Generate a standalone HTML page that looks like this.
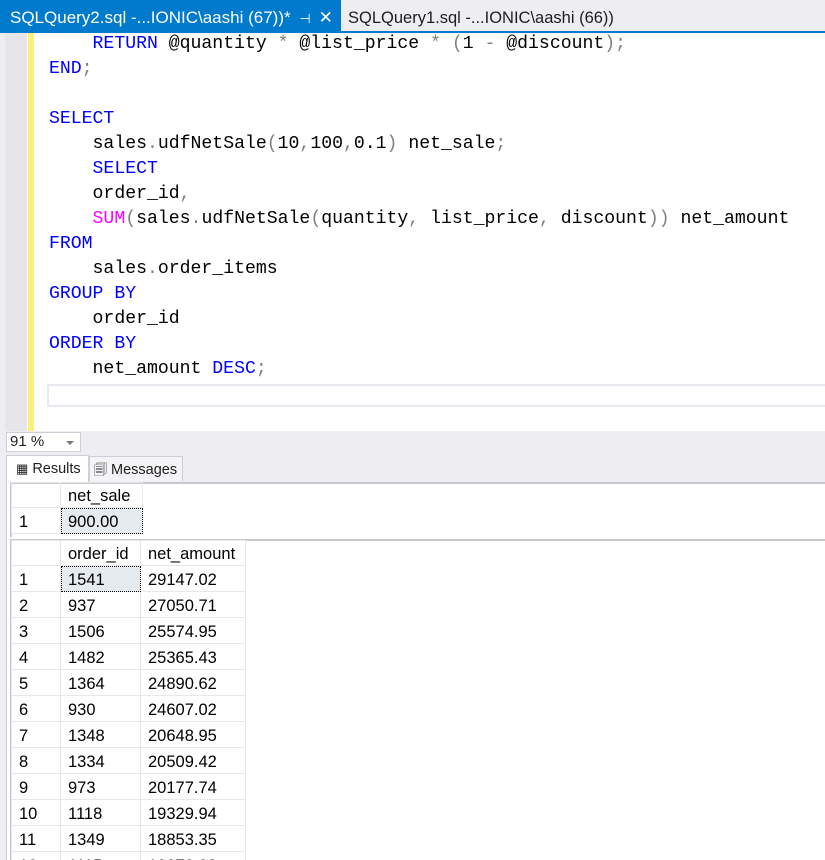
<!DOCTYPE html>
<html><head><meta charset="utf-8"><style>
*{margin:0;padding:0;box-sizing:border-box}
html,body{width:825px;height:860px;overflow:hidden}
body{background:#eeeef2;position:relative;font-family:"Liberation Sans",sans-serif}
#wrap{position:absolute;left:0;top:0;width:825px;height:860px;overflow:hidden}
.abs{position:absolute}
#tabs{left:0;top:0;width:825px;height:33px;background:#eeeef2;border-bottom:2px solid #007acc}
#t1{left:0;top:0;width:341px;height:31px;background:#007acc;color:#fff;font-size:17px;line-height:35px;padding-left:10px;white-space:nowrap}
#t2{left:348px;top:0;height:31px;color:#1e1e1e;font-size:16.5px;line-height:37px;white-space:nowrap}
#ed{left:5px;top:33px;width:820px;height:398px;background:#fff}
#gut{left:5px;top:33px;width:22px;height:398px;background:#e6e6ea}
#yel{left:28px;top:33px;width:6px;height:398px;background:#fbef7d}
#cur{left:47px;top:384px;width:778px;height:23px;border:2px solid #e8e8ee;border-right:none}
.code{left:49px;top:32px;font-family:"Liberation Mono",monospace;font-size:18.15px;line-height:25px;white-space:pre;color:#000}
.k{color:#0000ff}.g{color:#808080}.m{color:#ff00ff}
#zoom{left:6px;top:432px;width:75px;height:20px;background:#fff;border:1px solid #ccced8;font-size:15px;line-height:18px;padding-left:3px;color:#1e1e1e}
#zoom:after{content:"";position:absolute;right:6px;top:8px;border-left:4px solid transparent;border-right:4px solid transparent;border-top:4px solid #777}
.rt{top:456px;height:25px;font-size:14.5px;line-height:25px;color:#1e1e1e;border:1px solid #ccced8;border-bottom:none;white-space:nowrap}
#res{left:6px;top:482px;width:819px;height:378px;background:#fff;border-left:1px solid #ccced8}
table{position:absolute;border-collapse:collapse;font-size:16.5px;color:#000}
td{height:26px;border:1px solid #e8e8ea;padding:2px 0 0 7px;line-height:22px}
.sel{background:#e6ebf0;outline:1px dotted #000;outline-offset:-1px}
.gbox{left:10px;width:815px;background:#fff;border-top:2px solid #c8c8cc;border-left:2px solid #c8c8cc}
</style></head><body><div id="wrap">
<div id="tabs" class="abs"></div>
<div id="t1" class="abs">SQLQuery2.sql -...IONIC\aashi (67))* <span style="margin-left:4px;font-size:13px">⊣</span><span style="margin-left:8px">✕</span></div>
<div id="t2" class="abs">SQLQuery1.sql -...IONIC\aashi (66))</div>
<div id="ed" class="abs"></div>
<div id="gut" class="abs"></div>
<div id="yel" class="abs"></div>
<div id="cur" class="abs"></div>
<div class="abs code">    <span class="k">RETURN</span> @quantity <span class="g">*</span> @list_price <span class="g">*</span> <span class="g">(</span>1 <span class="g">-</span> @discount<span class="g">);</span>
<span class="k">END</span><span class="g">;</span>

<span class="k">SELECT</span>
    sales<span class="g">.</span>udfNetSale<span class="g">(</span>10<span class="g">,</span>100<span class="g">,</span>0.1<span class="g">)</span> net_sale<span class="g">;</span>
    <span class="k">SELECT</span>
    order_id<span class="g">,</span>
    <span class="m">SUM</span><span class="g">(</span>sales<span class="g">.</span>udfNetSale<span class="g">(</span>quantity<span class="g">,</span> list_price<span class="g">,</span> discount<span class="g">))</span> net_amount
<span class="k">FROM</span>
    sales<span class="g">.</span>order_items
<span class="k">GROUP BY</span>
    order_id
<span class="k">ORDER BY</span>
    net_amount <span class="k">DESC</span><span class="g">;</span></div>
<div id="zoom" class="abs">91 %</div>
<div class="abs rt" style="left:6px;width:83px;background:#fff;top:455px;height:27px;padding-left:9px"><span style="font-size:13px">▦</span> Results</div>
<div class="abs rt" style="left:89px;width:94px;background:#f4f4f6;padding-left:4px"><span style="font-size:13px">🗐</span> Messages</div>
<div id="res" class="abs"></div>
<div class="abs gbox" style="top:482px;height:55px"></div>
<table style="left:11px;top:482px">
<tr><td style="width:49px;height:25px"></td><td style="width:82px;height:25px">net_sale</td></tr>
<tr><td>1</td><td class="sel">900.00</td></tr></table>
<div class="abs gbox" style="top:539px;height:321px"></div>
<table style="left:11px;top:540px">
<tr><td style="width:49px;height:25px"></td><td style="width:80px;height:25px">order_id</td><td style="width:105px;height:25px">net_amount</td></tr>
<tr><td>1</td><td class="sel">1541</td><td>29147.02</td></tr>
<tr><td>2</td><td>937</td><td>27050.71</td></tr>
<tr><td>3</td><td>1506</td><td>25574.95</td></tr>
<tr><td>4</td><td>1482</td><td>25365.43</td></tr>
<tr><td>5</td><td>1364</td><td>24890.62</td></tr>
<tr><td>6</td><td>930</td><td>24607.02</td></tr>
<tr><td>7</td><td>1348</td><td>20648.95</td></tr>
<tr><td>8</td><td>1334</td><td>20509.42</td></tr>
<tr><td>9</td><td>973</td><td>20177.74</td></tr>
<tr><td>10</td><td>1118</td><td>19329.94</td></tr>
<tr><td>11</td><td>1349</td><td>18853.35</td></tr>
<tr><td>12</td><td>1115</td><td>18070.83</td></tr>
</table>
</div></body></html>
